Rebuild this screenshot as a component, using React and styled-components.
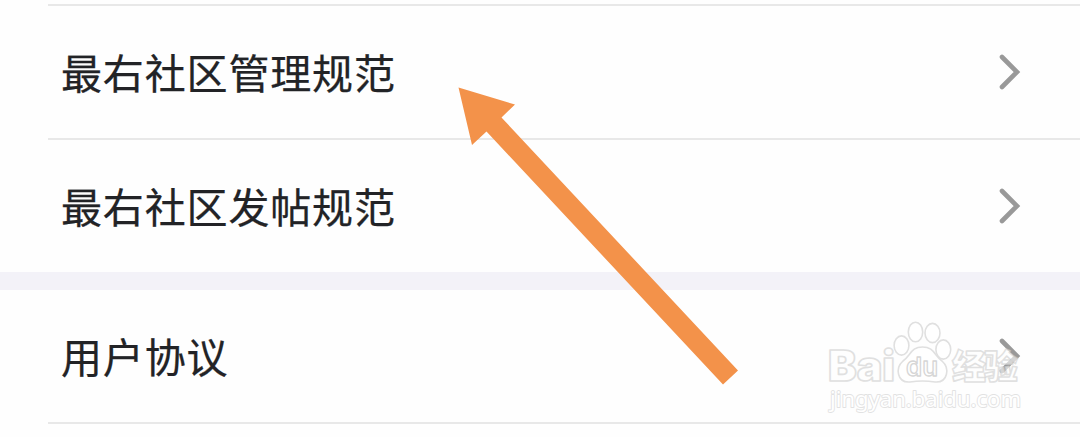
import React from "react";
import styled, { createGlobalStyle } from "styled-components";

// Data
const groups = [
	{ id: "community", items: ["最右社区管理规范", "最右社区发帖规范"] },
	{ id: "legal", items: ["用户协议"] },
];

const Chevron = () => (
	<StyledChevron viewBox="0 0 24 40">
		<path d="M4 5 L19 20 L4 35" />
	</StyledChevron>
);

const Arrow = () => (
	<StyledArrow viewBox="0 0 280 298">
		<path d="M0.5 0.5 L57 17.5 L43.5 30.5 L280 283.5 L265 297.5 L28.5 44.5 L14 58 Z" />
	</StyledArrow>
);

const Watermark = () => (
	<StyledWatermark viewBox="0 0 210 110">
		<g className="outline">
			<text className="bai" x="8" y="71" fontSize="42" textLength="67" lengthAdjust="spacingAndGlyphs">
				Bai
			</text>
			<ellipse cx="81.5" cy="35.5" rx="7.4" ry="9.6" />
			<ellipse cx="95.5" cy="22" rx="7.2" ry="9.8" />
			<ellipse cx="112.5" cy="23" rx="7.5" ry="9.6" />
			<ellipse cx="123.3" cy="39.5" rx="7.4" ry="9.6" />
			<path d="M102.5 37 C91 37 91 45 83 51 C75 58 77 73 90 72 C97 70.8 108 70.8 115 72 C128 73 130 58 122 51 C114 45 114 37 102.5 37 Z" />
			<text className="du" x="86" y="66" fontSize="26" textLength="32" lengthAdjust="spacingAndGlyphs">
				du
			</text>
			<text className="cjk" x="132" y="69" fontSize="34" textLength="66">
				经验
			</text>
		</g>
		<text className="url" x="10" y="97" fontSize="22" textLength="191" lengthAdjust="spacingAndGlyphs">
			jingyan.baidu.com
		</text>
	</StyledWatermark>
);

const App = () => {
	return (
		<>
			<GlobalStyle />
			<StyledPage>
				{groups.map((group) => (
					<StyledGroup key={group.id}>
						{group.items.map((item) => (
							<StyledRow key={item}>
								<StyledLabel>{item}</StyledLabel>
								<Chevron />
							</StyledRow>
						))}
					</StyledGroup>
				))}
				<Watermark />
				<Arrow />
			</StyledPage>
		</>
	);
};

const GlobalStyle = createGlobalStyle`
	* {
		box-sizing: border-box;
	}
	body {
		margin: 0;
		background: #fefefe;
		font-family: "Noto Sans CJK SC", sans-serif;
	}
`;

const StyledPage = styled.main`
	position: relative;
	height: 437px;
	padding-top: 4px;
	overflow: hidden;
`;

const StyledGroup = styled.section`
	& + & {
		border-top: 18px solid #f3f2f8;
	}
	&:first-child > div {
		border-top: 2px solid #e8e8e8;
	}
	&:nth-child(2) > div {
		border-bottom: 2px solid #e8e8e8;
	}
`;

const StyledRow = styled.div`
	display: flex;
	align-items: center;
	justify-content: space-between;
	height: 134px;
	margin-left: 48px;
	padding: 0 58px 0 13px;
`;

const StyledLabel = styled.span`
	padding-bottom: 3px;
	color: #222326;
	font-size: 41px;
	line-height: 60px;
	letter-spacing: 0.85px;
	-webkit-text-stroke: 0.25px #222326;
`;

const StyledChevron = styled.svg`
	width: 24px;
	height: 40px;
	path {
		fill: none;
		stroke: #999;
		stroke-width: 4.6;
		stroke-linecap: round;
		stroke-linejoin: miter;
	}
`;

const StyledArrow = styled.svg`
	position: absolute;
	left: 458px;
	top: 87px;
	width: 280px;
	height: 298px;
	fill: #f3924a;
`;

const StyledWatermark = styled.svg`
	position: absolute;
	left: 820px;
	top: 310px;
	width: 210px;
	height: 110px;
	.outline {
		fill: rgba(255, 255, 255, 0.6);
		stroke: #e0e0e0;
		stroke-width: 1.6;
		stroke-linejoin: round;
	}
	.bai {
		font-family: Inter, sans-serif;
		font-weight: 900;
	}
	.du {
		fill: #fff;
		font-family: Inter, sans-serif;
		font-weight: 600;
		stroke: #d6d6d6;
		stroke-width: 1.3;
	}
	.cjk {
		font-family: "Noto Sans CJK SC", sans-serif;
		font-weight: 900;
		stroke: rgba(205, 205, 205, 0.6);
	}
	.url {
		font-family: "Noto Sans", sans-serif;
		font-weight: 400;
		fill: #fff;
		stroke: #e2e2e2;
		stroke-width: 1.8;
		stroke-linejoin: round;
		paint-order: stroke;
	}
`;

export default App;
